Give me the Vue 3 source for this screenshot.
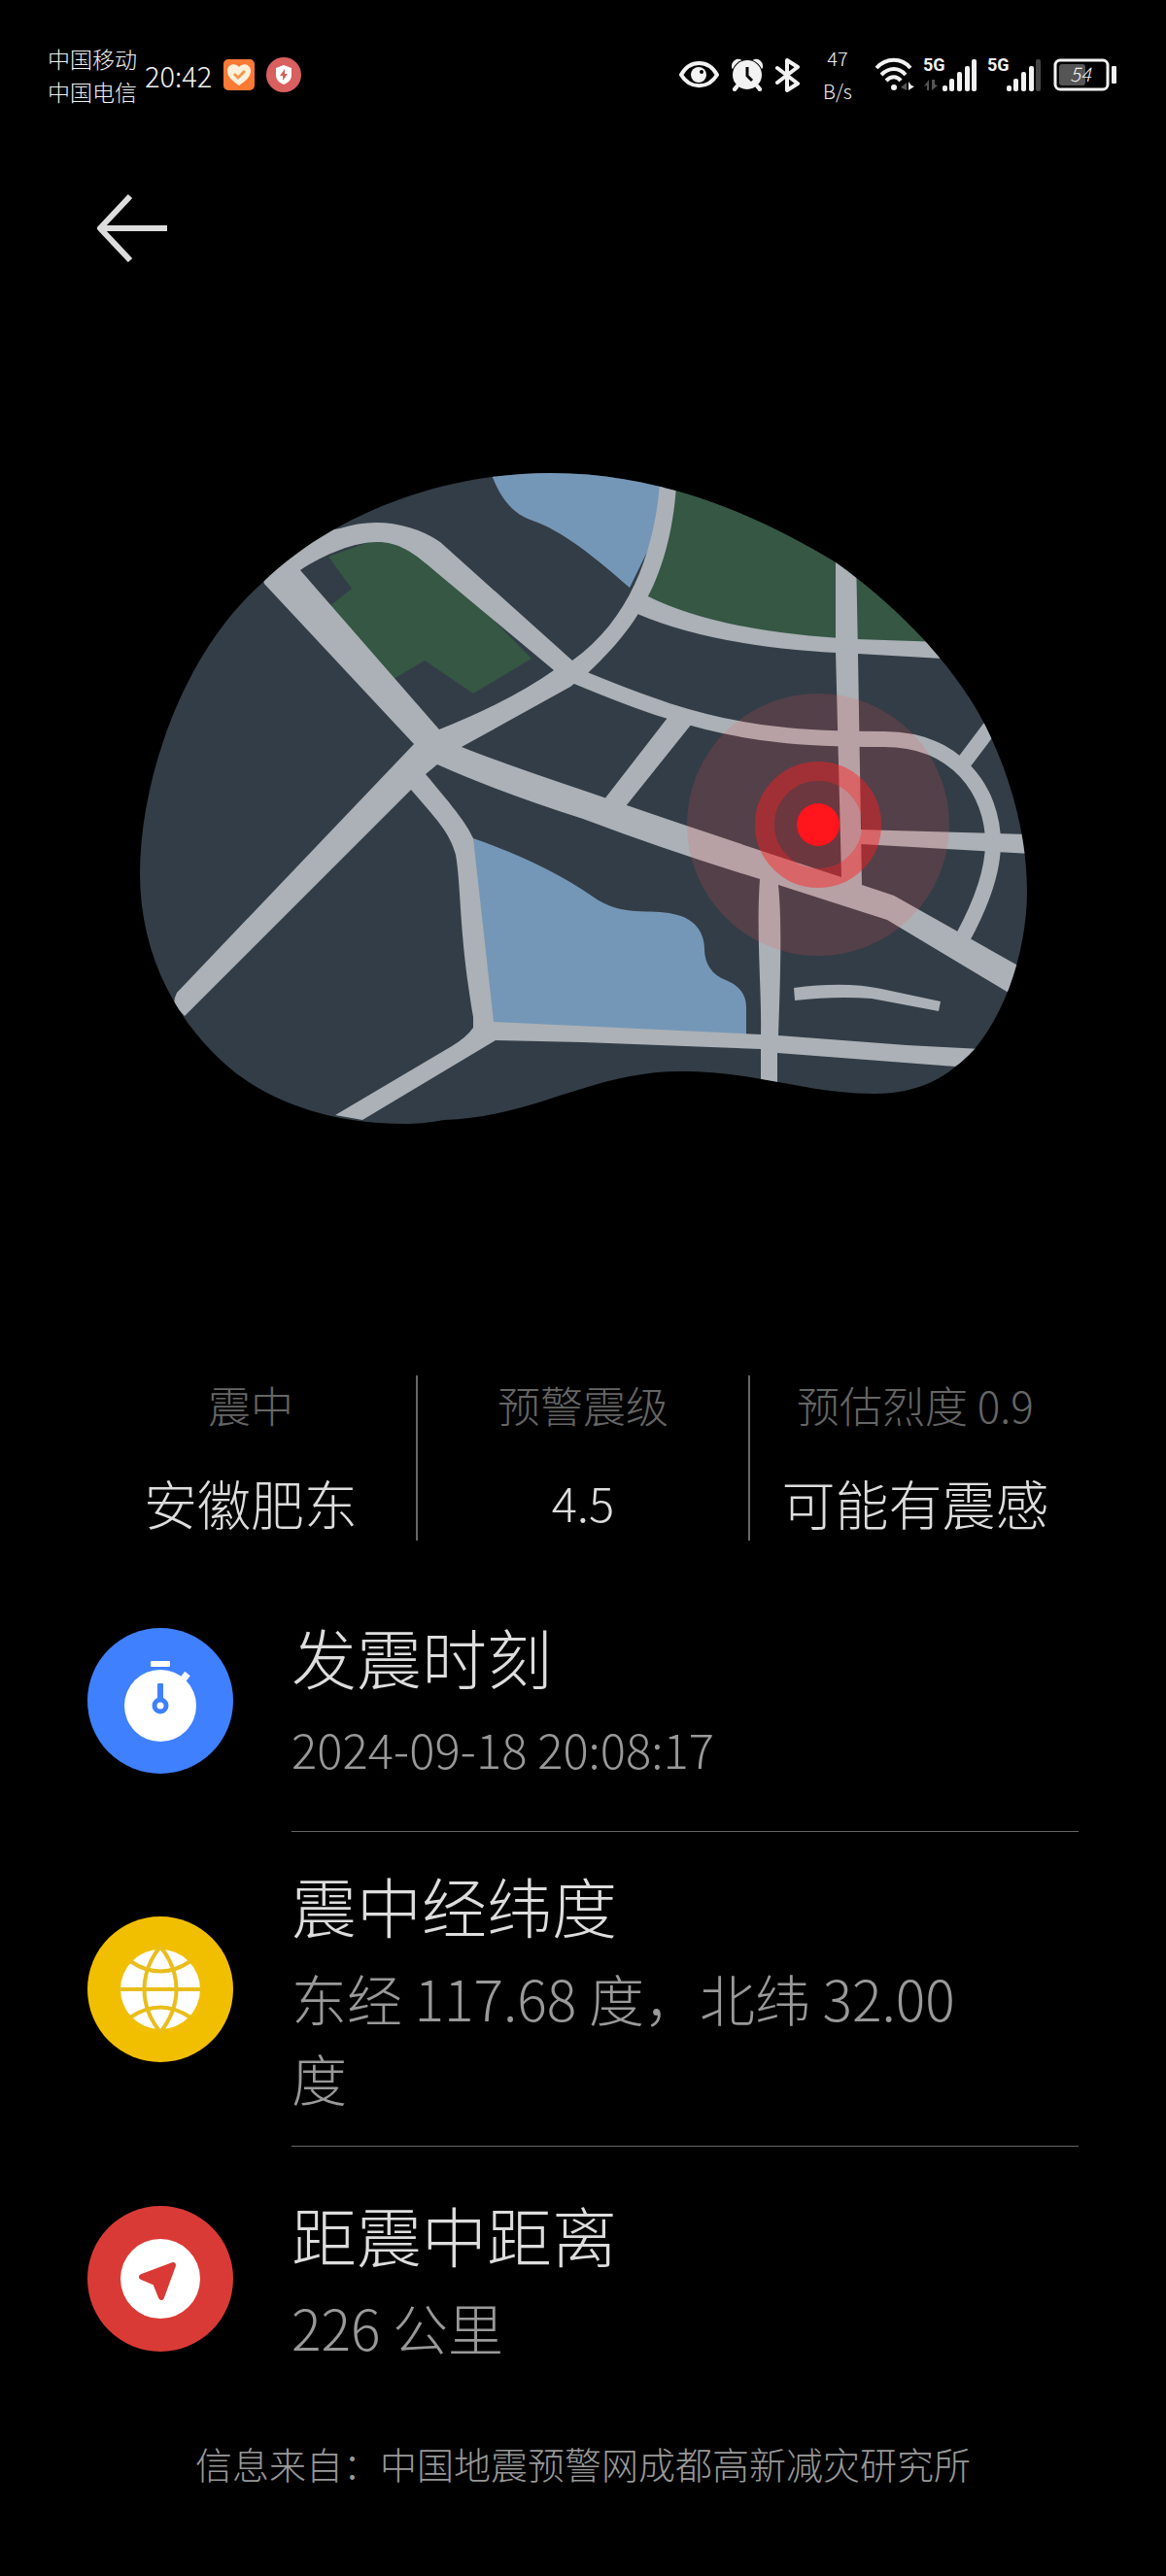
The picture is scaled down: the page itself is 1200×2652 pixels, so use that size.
<script setup>
const carriers = ['中国移动', '中国电信']

const signals = [
  { id: 'sim1', data: true, level: 5 },
  { id: 'sim2', data: false, level: 4 },
]
const bars = [
  { x: 20, h: 6 },
  { x: 27, h: 13 },
  { x: 35, h: 20 },
  { x: 43, h: 26 },
  { x: 50, h: 33 },
]

const stats = [
  { label: '震中', value: '安徽肥东' },
  { label: '预警震级', value: '4.5', numeric: true },
  { label: '预估烈度 0.9', value: '可能有震感' },
]

const details = [
  { icon: 'clock', title: '发震时刻', text: '2024-09-18 20:08:17', numeric: true },
  { icon: 'globe', title: '震中经纬度', text: '东经 117.68 度，北纬 32.00 度' },
  { icon: 'nav', title: '距震中距离', text: '226 公里' },
]
</script>

<template>
  <div class="page">
    <header class="status">
      <div class="carriers">
        <span v-for="c in carriers" :key="c">{{ c }}</span>
      </div>
      <span class="time">20:42</span>
      <svg class="app-icon" width="32" height="32" viewBox="0 0 32 32" aria-hidden="true">
        <rect width="32" height="32" rx="5" fill="#fb7a35" />
        <path d="M16 27 C9 22 4 18 4 12 C4 5 12 3 16 8 C20 3 28 5 28 12 C28 18 23 22 16 27Z" fill="#fff1dc" />
        <path d="M11 15 L15 19 L22 12" fill="none" stroke="#f0994f" stroke-width="3" />
      </svg>
      <svg class="app-icon" width="36" height="36" viewBox="0 0 36 36" aria-hidden="true">
        <circle cx="18" cy="18" r="18" fill="#d9605f" />
        <path d="M18 8 L26 11 V18 C26 23 23 26 18 28 C13 26 10 23 10 18 V11Z" fill="#fff" />
        <path d="M19 12 L14 19 H17 L17 24 L22 17 H19Z" fill="#d9605f" />
      </svg>

      <div class="indicators">
        <svg class="eye" width="41" height="28" viewBox="0 0 41 28" fill="none" aria-hidden="true">
          <path d="M2 14 C11 -2 30 -2 39 14 C30 29 11 29 2 14Z" stroke="#f2f2f2" stroke-width="4" stroke-linejoin="round" />
          <circle cx="20" cy="14" r="8" fill="#f2f2f2" />
          <circle cx="23" cy="11" r="2" fill="#000" />
        </svg>
        <svg class="alarm" width="34" height="34" viewBox="0 0 34 34" aria-hidden="true">
          <path d="M4 10 C2 6 6 2 10 4 M30 10 C32 6 28 2 24 4" fill="none" stroke="#f2f2f2" stroke-width="5" stroke-linecap="round" />
          <path d="M8 27 L4 32 M26 27 L30 32" stroke="#f2f2f2" stroke-width="4" stroke-linecap="round" />
          <circle cx="17" cy="17" r="16" fill="#000" />
          <circle cx="17" cy="17" r="15" fill="#f2f2f2" />
          <path d="M8 27 L4 32 M26 27 L30 32" stroke="#f2f2f2" stroke-width="4" stroke-linecap="round" />
          <path d="M17 9 V18 L22 23" fill="none" stroke="#000" stroke-width="3" />
        </svg>
        <svg class="bluetooth" width="26" height="37" viewBox="0 0 26 37" fill="none" aria-hidden="true">
          <path d="M2 11 L23 27 L12 34 V3 L23 10 L2 26" stroke="#f2f2f2" stroke-width="4" stroke-linejoin="round" stroke-linecap="round" />
        </svg>
        <div class="speed"><span>47</span><span>B/s</span></div>
        <svg class="wifi" width="42" height="36" viewBox="0 0 42 36" fill="none" aria-hidden="true">
          <path d="M2 11 C12 0 28 0 37 11 M7 18 C15 10 25 10 32 18 M12 24 C17 19 23 19 27 24" stroke="#f2f2f2" stroke-width="4" />
          <circle cx="20" cy="31" r="3" fill="#f2f2f2" />
          <path d="M33 26 V34 L27 31Z" fill="#555" />
          <path d="M35 25 V34 L41 30 L38 29Z" fill="#f2f2f2" />
        </svg>
        <div v-for="s in signals" :key="s.id" class="signal">
          <span class="net">5G</span>
          <svg width="56" height="36" viewBox="0 0 56 36" aria-hidden="true">
            <path v-if="s.data" d="M6 23 V34 H4 V29 L1 30Z M9 23 V34 L15 29 L12 28 V23Z" fill="#555" />
            <rect
              v-for="(b, i) in bars"
              :key="b.x"
              :x="b.x"
              :y="35 - b.h"
              width="5"
              :height="b.h"
              rx="2"
              :fill="i < s.level ? '#f2f2f2' : '#444'"
            />
          </svg>
        </div>
        <svg class="battery" width="66" height="34" viewBox="0 0 66 34" aria-hidden="true">
          <rect x="2" y="2" width="54" height="30" rx="5" fill="none" stroke="#f2f2f2" stroke-width="3" />
          <rect x="6" y="6" width="27" height="22" rx="3" fill="#555" />
          <rect x="60" y="8" width="5" height="18" rx="1" fill="#f2f2f2" />
          <text x="28" y="24" text-anchor="middle" class="charge">54</text>
        </svg>
      </div>
    </header>

    <nav class="bar">
      <button class="back" type="button" aria-label="返回">
        <svg width="74" height="72" viewBox="0 0 74 72" fill="none" aria-hidden="true">
          <path d="M34 3 L3 36 L34 69 M3 36 H72" stroke="#ddd" stroke-width="6" stroke-linejoin="round" />
        </svg>
      </button>
    </nav>

    <main>
      <svg class="map" viewBox="0 470 1200 700" role="img" aria-label="震中地图">
        <defs>
          <clipPath id="land">
            <path d="M144 900 C144 800 190 670 270 600 C340 532 450 487 567 487 C680 487 780 530 860 579 C915 618 980 680 1013 745 C1040 798 1057 860 1057 917 C1057 970 1040 1035 1003 1080 C975 1110 945 1126 900 1126 C830 1126 780 1103 700 1103 C610 1103 550 1150 457 1153 C440 1156 428 1157 417 1157 C350 1157 290 1140 243 1105 C180 1055 144 980 144 900Z" />
          </clipPath>
        </defs>
        <g clip-path="url(#land)">
          <rect x="140" y="480" width="920" height="680" fill="#333d47" />
          <g fill="#7597b7">
            <path d="M500 470 C508 500 520 524 543 534 C575 545 600 563 648 605 L670 560 L690 470Z" />
            <path d="M484 862 Q560 888 610 923 C640 945 670 935 693 941 C715 945 725 960 725 977 C725 992 733 1004 747 1009 C762 1015 768 1025 768 1037 V1070 H500Z" />
          </g>
          <g fill="#355744">
            <path d="M690 470 C690 520 683 570 660 618 Q750 660 870 662 L980 668 V560 L800 470Z" />
            <path d="M338 573 L362 606 L342 622 L330 630 L400 702 L437 680 L487 714 L547 678 L497 627 L450 587 Q420 552 388 555Z" />
          </g>
          <g fill="#abb1b6">
            <path d="M272 601 L426 766 L182 1022 Q178 1030 180 1035 L190 1046 L423 813 C448 842 463 857 469 880 C475 915 472 960 487 1047 V1058 Q480 1068 465 1077 L345 1148 L373 1153 L510 1071 L600 1073 L783 1080 V1125 H800 V1084 L983 1098 L1010 1080 L933 1076 L801 1066 C803 1010 805 950 801 911 L913 947 L1038 1022 L1060 1001 L920 922 L887 911 L883 673 L881 570 H860 V670 L866 903 Q740 862 610 817 Q520 787 475 769 L587 707 L605 693 C645 655 697 600 697 470 H680 C680 540 660 630 589 680 L453 558 C435 545 410 538 387 538 Q368 538 350 544 L260 560Z
              M309 587 C335 570 365 558 388 558 C410 558 425 568 450 590 L570 690 Q525 722 452 751Z
              M450 787 L438 797 C470 835 480 848 487 863 L508 1052 L783 1065 C784 1020 778 960 782 905 Q690 877 600 843 Q510 814 450 787Z" fill-rule="evenodd" />
            <path d="M665 613 Q740 651 881 658 L970 661 V678 L883 673 Q740 668 656 632Z" />
            <path d="M690 735 L618 828 L640 835 L712 745Z" />
            <path d="M883 854 L1060 859 V879 L886 869Z" />
            <path d="M817 1017 Q870 1010 907 1018 L968 1031 L966 1041 L897 1028 Q860 1025 818 1030Z" />
          </g>
          <g fill="none" stroke="#abb1b6" stroke-width="16">
            <path d="M588 694 C650 720 720 748 800 756 C840 761 880 761 910 761 C985 761 1022 815 1022 868 C1022 895 1010 930 991 965" />
            <path d="M1019 749 L992 785" />
          </g>
        </g>
        <circle cx="842" cy="849" r="135" fill="#fa5452" fill-opacity=".17" />
        <circle cx="842" cy="849" r="45" fill="#ff000a" fill-opacity=".14" />
        <circle cx="842" cy="849" r="55" fill="none" stroke="#ff1c20" stroke-opacity=".45" stroke-width="20" />
        <circle cx="842" cy="849" r="22" fill="#ff151b" />
      </svg>

      <dl class="stats">
        <div v-for="s in stats" :key="s.label" class="stat">
          <dt>{{ s.label }}</dt>
          <dd :class="{ numeric: s.numeric }">{{ s.value }}</dd>
        </div>
      </dl>

      <ul class="details">
        <li v-for="d in details" :key="d.title" class="row">
          <svg v-if="d.icon === 'clock'" class="badge" viewBox="0 0 150 150" aria-hidden="true">
            <circle cx="75" cy="75" r="75" fill="#3f80ff" />
            <rect x="65" y="34" width="20" height="6" rx="1" fill="#fff" />
            <path d="M96 56 L103 47" stroke="#fff" stroke-width="7" />
            <circle cx="75" cy="80" r="37" fill="#fff" />
            <rect x="72" y="57" width="6" height="20" rx="1" fill="#3f80ff" />
            <circle cx="75" cy="80" r="6" fill="#fff" stroke="#3f80ff" stroke-width="5" />
          </svg>
          <svg v-else-if="d.icon === 'globe'" class="badge" viewBox="0 0 150 150" aria-hidden="true">
            <circle cx="75" cy="75" r="75" fill="#f2bf00" />
            <circle cx="75" cy="75" r="41" fill="#fff" />
            <g fill="none" stroke="#e9bd1c" stroke-width="4">
              <path d="M32 75 H118 M44 46 Q75 67 106 46 M44 104 Q75 83 106 104" />
              <path d="M75 31 C53 58 53 92 75 119 C97 92 97 58 75 31Z" />
            </g>
          </svg>
          <svg v-else class="badge" viewBox="0 0 150 150" aria-hidden="true">
            <circle cx="75" cy="75" r="75" fill="#da3a35" />
            <circle cx="75" cy="75" r="41" fill="#fff" />
            <path d="M56 73 L88 61 L76 94 L70 79Z" fill="#da3a35" stroke="#da3a35" stroke-width="6" stroke-linejoin="round" />
          </svg>
          <div class="info">
            <h2>{{ d.title }}</h2>
            <p :class="{ numeric: d.numeric }">{{ d.text }}</p>
          </div>
        </li>
      </ul>
    </main>

    <footer class="source">信息来自：中国地震预警网成都高新减灾研究所</footer>
  </div>
</template>

<style>
body {
  margin: 0;
  background: #000;
}
</style>

<style scoped>
.page {
  box-sizing: border-box;
  background: #000;
  color: #ddd;
  font-family: "Noto Sans CJK SC", sans-serif;
  font-weight: 300;
  padding-bottom: 88px;
}

.status {
  display: flex;
  align-items: center;
  box-sizing: border-box;
  height: 154px;
  padding: 0 50px 0 49px;
  color: #f2f2f2;
}
.carriers {
  display: flex;
  flex-direction: column;
  font-size: 23px;
  line-height: 34px;
}
.time {
  margin-left: 8px;
  font-size: 29px;
  line-height: 40px;
}
.app-icon {
  margin-left: 12px;
}
.indicators {
  display: flex;
  align-items: center;
  margin-left: auto;
}
.alarm,
.bluetooth {
  margin-left: 12px;
}
.speed {
  display: flex;
  flex-direction: column;
  align-items: center;
  width: 76px;
  font-size: 20px;
  line-height: 34px;
}
.signal {
  position: relative;
  display: flex;
  margin-left: 8px;
}
.signal + .signal {
  margin-left: 10px;
}
.net {
  position: absolute;
  top: -2px;
  left: 0;
  font-family: Roboto, sans-serif;
  font-size: 18px;
  font-weight: 700;
  line-height: 20px;
}
.battery {
  margin-left: 12px;
}
.charge {
  font-size: 20px;
  font-style: italic;
  fill: #f2f2f2;
}

.bar {
  display: flex;
  padding: 45px 100px 0;
}
.back {
  display: flex;
  padding: 0;
  border: 0;
  background: none;
  cursor: pointer;
}

.map {
  display: block;
  width: 100%;
  margin: 199px 0 246px;
}

.stats {
  display: flex;
  margin: 0;
  padding: 0 88px;
}
.stat {
  flex: 1;
  box-sizing: border-box;
  height: 170px;
  text-align: center;
  white-space: nowrap;
}
.stat + .stat {
  border-left: 2px solid #666;
}
dt {
  color: #666;
  font-size: 44px;
  line-height: 60px;
}
dd {
  margin: 34px 0 0;
  font-size: 55px;
  line-height: 72px;
}
dd.numeric {
  font-size: 49px;
}

.details {
  margin: 29px 0 0;
  padding: 0 90px;
  list-style: none;
}
.row {
  display: flex;
  align-items: center;
  gap: 60px;
}
.badge {
  flex: none;
  width: 150px;
  height: 150px;
}
.info {
  flex: 1;
  display: flex;
  flex-direction: column;
  justify-content: center;
  box-sizing: border-box;
  min-height: 271px;
  padding: 31px 60px 30px 0;
  border-bottom: 1px solid transparent;
}
.row:not(:last-child) .info {
  border-bottom-color: #666;
}
h2 {
  margin: 0 0 10px;
  font-size: 67px;
  font-weight: 300;
  line-height: 88px;
}
p {
  margin: 0;
  color: #999;
  font-size: 57px;
  line-height: 82px;
}
p.numeric {
  font-size: 49px;
}

.source {
  margin-top: 29px;
  color: #999;
  font-size: 38px;
  line-height: 52px;
  text-align: center;
}
</style>
